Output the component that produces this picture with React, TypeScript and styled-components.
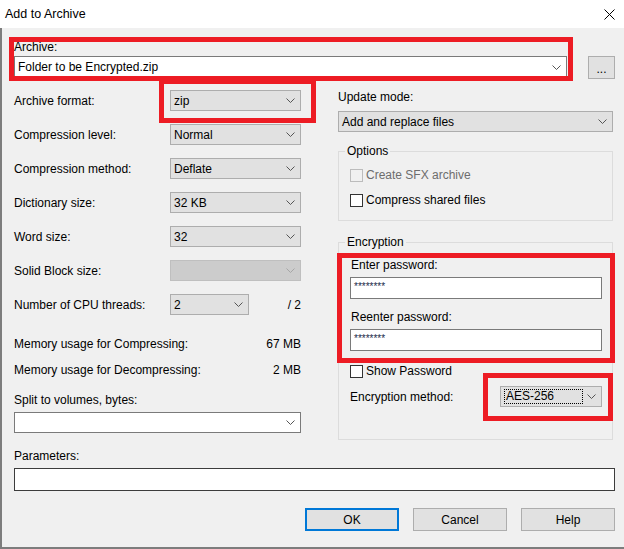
import styled, { createGlobalStyle } from 'styled-components';

const GlobalStyle = createGlobalStyle`
  html, body {
    margin: 0;
    padding: 0;
    background: #ffffff;
  }
  body {
    font-family: "Liberation Sans", Arial, sans-serif;
    font-size: 12px;
    color: #000;
  }
  * {
    box-sizing: border-box;
  }
`;

const Window = styled.div`
  width: 624px;
  height: 549px;
  display: flex;
  flex-direction: column;
  overflow: hidden;
`;

const TitleBar = styled.div`
  height: 28px;
  flex: none;
  background: #fff;
  display: flex;
  align-items: center;
  justify-content: space-between;
  padding: 0 9px 0 5px;
`;

const Title = styled.span`
  font-size: 12.5px;
  line-height: 14px;
`;

const Body = styled.div`
  flex: 1;
  background: #f0f0f0;
  border-left: 2px solid #7d7d7d;
  border-bottom: 2px solid #7d7d7d;
  padding: 12px 9px 0 12px;
  display: flex;
  flex-direction: column;
`;

const Highlight = styled.div<{ $top: number; $right: number; $bottom: number; $left: number }>`
  position: relative;
  &::after {
    content: '';
    position: absolute;
    top: ${(p) => p.$top}px;
    right: ${(p) => p.$right}px;
    bottom: ${(p) => p.$bottom}px;
    left: ${(p) => p.$left}px;
    border: 5px solid #ed1c24;
    pointer-events: none;
    z-index: 2;
  }
`;

const Label = styled.div<{ $mt?: number }>`
  line-height: 14px;
  white-space: nowrap;
  margin-top: ${(p) => p.$mt ?? 0}px;
`;

const ArchiveRow = styled.div`
  display: flex;
  align-items: flex-end;
`;

const ArchiveBlock = styled(Highlight)`
  width: 553px;
`;

const Combo = styled.div<{ $variant: 'edit' | 'list' | 'disabled'; $width?: number; $mt?: number; $h?: number }>`
  display: flex;
  align-items: center;
  justify-content: space-between;
  width: ${(p) => (p.$width ? `${p.$width}px` : '100%')};
  height: ${(p) => p.$h ?? 21}px;
  margin-top: ${(p) => p.$mt ?? 0}px;
  padding: 0 5px 0 3px;
  border: 1px solid
    ${(p) => (p.$variant === 'edit' ? '#7a7a7a' : p.$variant === 'disabled' ? '#bfbfbf' : '#adadad')};
  background: ${(p) => (p.$variant === 'edit' ? '#ffffff' : p.$variant === 'disabled' ? '#cccccc' : '#e1e1e1')};
  color: ${(p) => (p.$variant === 'disabled' ? '#a0a0a0' : '#000')};
  white-space: nowrap;
`;

const ComboText = styled.span`
  line-height: 14px;
`;

const FocusText = styled.span`
  display: flex;
  align-items: center;
  width: 79px;
  height: 15px;
  padding-left: 1px;
  border: 1px dotted #000;
  line-height: 13px;
`;

const Chevron = ({ color = '#555' }: { color?: string }) => (
  <svg width="9" height="5" viewBox="0 0 9 5" style={{ flex: 'none' }}>
    <polyline points="0.5,0.5 4.5,4.5 8.5,0.5" fill="none" stroke={color} strokeWidth="1" />
  </svg>
);

const Button = styled.div<{ $primary?: boolean }>`
  display: flex;
  align-items: center;
  justify-content: center;
  width: 94px;
  height: 23px;
  background: #e1e1e1;
  border: ${(p) => (p.$primary ? '2px solid #0078d7' : '1px solid #adadad')};
`;

const BrowseButton = styled(Button)`
  width: 27px;
  margin-left: 21px;
  margin-bottom: -1px;
  padding-top: 3px;
`;

const Columns = styled.div`
  display: grid;
  grid-template-columns: 287px 275px;
  column-gap: 37px;
  align-items: start;
  margin-top: 12px;
`;

const Column = styled.div`
  display: flex;
  flex-direction: column;
`;

const FieldList = styled.div`
  display: flex;
  flex-direction: column;
  gap: 13px;
`;

const FieldRow = styled.div`
  display: flex;
  align-items: center;
  height: 21px;
`;

const FieldLabel = styled.span`
  width: 156px;
  flex: none;
  line-height: 14px;
`;

const ThreadTotal = styled.span`
  margin-left: auto;
  line-height: 14px;
`;

const InfoRow = styled.div<{ $mt: number }>`
  display: flex;
  justify-content: space-between;
  line-height: 14px;
  margin-top: ${(p) => p.$mt}px;
`;

const Group = styled.fieldset<{ $mt: number; $pt: number; $pb: number }>`
  margin: ${(p) => p.$mt}px 0 0 0;
  padding: ${(p) => p.$pt}px 10px ${(p) => p.$pb}px 11px;
  border: 1px solid #dcdcdc;
  min-inline-size: 0;
`;

const Legend = styled.legend`
  padding: 0 2px;
  margin-left: -5px;
  line-height: 14px;
`;

const CheckRow = styled.label<{ $mt?: number; $disabled?: boolean }>`
  display: flex;
  align-items: center;
  gap: 3px;
  height: 14px;
  line-height: 14px;
  margin-top: ${(p) => p.$mt ?? 0}px;
  color: ${(p) => (p.$disabled ? '#6d6d6d' : '#000')};
`;

const CheckBox = styled.span<{ $disabled?: boolean }>`
  width: 13px;
  height: 13px;
  flex: none;
  border: 1px solid ${(p) => (p.$disabled ? '#bcbcbc' : '#333')};
  background: ${(p) => (p.$disabled ? '#f0f0f0' : '#fff')};
`;

const TextBox = styled.div<{ $h: number; $mt: number; $dark?: boolean }>`
  width: 100%;
  height: ${(p) => p.$h}px;
  margin-top: ${(p) => p.$mt}px;
  background: #fff;
  border: 1px solid ${(p) => (p.$dark ? '#3c3c3c' : '#7a7a7a')};
  padding: 3px 3px 0;
  font-size: 10px;
  line-height: 12px;
  color: #1a2a4a;
`;

const MethodRow = styled.div`
  display: flex;
  align-items: center;
  justify-content: space-between;
  margin-top: 8px;
  height: 21px;
`;

const PasswordLabel = styled(Label)`
  padding-left: 1px;
`;

const ButtonRow = styled.div`
  display: flex;
  justify-content: flex-end;
  gap: 14px;
  margin-top: 17px;
`;

const CloseIcon = () => (
  <svg width="11" height="11" viewBox="0 0 11 11">
    <path d="M0.5 0.5 L10.5 10.5 M10.5 0.5 L0.5 10.5" stroke="#000" strokeWidth="1" fill="none" />
  </svg>
);

const leftFields: { label: string; value: string; variant: 'list' | 'disabled'; width?: number; extra?: string }[] = [
  { label: 'Compression level:', value: 'Normal', variant: 'list' },
  { label: 'Compression method:', value: 'Deflate', variant: 'list' },
  { label: 'Dictionary size:', value: '32 KB', variant: 'list' },
  { label: 'Word size:', value: '32', variant: 'list' },
  { label: 'Solid Block size:', value: '', variant: 'disabled' },
  { label: 'Number of CPU threads:', value: '2', variant: 'list', width: 79, extra: '/ 2' },
];

export default function App() {
  return (
    <>
      <GlobalStyle />
      <Window>
        <TitleBar>
          <Title>Add to Archive</Title>
          <CloseIcon />
        </TitleBar>
        <Body>
          <ArchiveRow>
            <ArchiveBlock $top={-3} $right={-6} $bottom={-3} $left={-5}>
              <Label>Archive:</Label>
              <Combo $variant="edit" $mt={2} $h={22}>
                <ComboText>Folder to be Encrypted.zip</ComboText>
                <Chevron />
              </Combo>
            </ArchiveBlock>
            <BrowseButton>...</BrowseButton>
          </ArchiveRow>

          <Columns>
            <Column>
              <FieldList>
                <FieldRow>
                  <FieldLabel>Archive format:</FieldLabel>
                  <Highlight $top={-11} $right={-15} $bottom={-12} $left={-11}>
                    <Combo $variant="list" $width={131}>
                      <ComboText>zip</ComboText>
                      <Chevron />
                    </Combo>
                  </Highlight>
                </FieldRow>
                {leftFields.map((f) => (
                  <FieldRow key={f.label}>
                    <FieldLabel>{f.label}</FieldLabel>
                    <Combo $variant={f.variant} $width={f.width ?? 131}>
                      <ComboText>{f.value}</ComboText>
                      <Chevron color={f.variant === 'disabled' ? '#a6a6a6' : '#555'} />
                    </Combo>
                    {f.extra && <ThreadTotal>{f.extra}</ThreadTotal>}
                  </FieldRow>
                ))}
              </FieldList>
              <InfoRow $mt={22}>
                <span>Memory usage for Compressing:</span>
                <span>67 MB</span>
              </InfoRow>
              <InfoRow $mt={12}>
                <span>Memory usage for Decompressing:</span>
                <span>2 MB</span>
              </InfoRow>
              <Label $mt={16}>Split to volumes, bytes:</Label>
              <Combo $variant="edit" $mt={5}>
                <ComboText />
                <Chevron />
              </Combo>
            </Column>

            <Column>
              <Label>Update mode:</Label>
              <Combo $variant="list" $mt={7}>
                <ComboText>Add and replace files</ComboText>
                <Chevron />
              </Combo>

              <Group $mt={12} $pt={10} $pb={13}>
                <Legend>Options</Legend>
                <CheckRow $disabled>
                  <CheckBox $disabled />
                  Create SFX archive
                </CheckRow>
                <CheckRow $mt={11}>
                  <CheckBox />
                  Compress shared files
                </CheckRow>
              </Group>

              <Group $mt={14} $pt={9} $pb={32}>
                <Legend>Encryption</Legend>
                <Highlight $top={-5} $right={-13} $bottom={-12} $left={-13}>
                  <PasswordLabel>Enter password:</PasswordLabel>
                  <TextBox $h={22} $mt={5}>********</TextBox>
                  <PasswordLabel $mt={11}>Reenter password:</PasswordLabel>
                  <TextBox $h={22} $mt={5}>********</TextBox>
                </Highlight>
                <CheckRow $mt={13}>
                  <CheckBox />
                  Show Password
                </CheckRow>
                <MethodRow>
                  <span>Encryption method:</span>
                  <Highlight $top={-13} $right={-11} $bottom={-14} $left={-17}>
                    <Combo $variant="list" $width={102}>
                      <FocusText>AES-256</FocusText>
                      <Chevron />
                    </Combo>
                  </Highlight>
                </MethodRow>
              </Group>
            </Column>
          </Columns>

          <Label $mt={9}>Parameters:</Label>
          <TextBox $h={23} $mt={5} $dark />

          <ButtonRow>
            <Button $primary>OK</Button>
            <Button>Cancel</Button>
            <Button>Help</Button>
          </ButtonRow>
        </Body>
      </Window>
    </>
  );
}
